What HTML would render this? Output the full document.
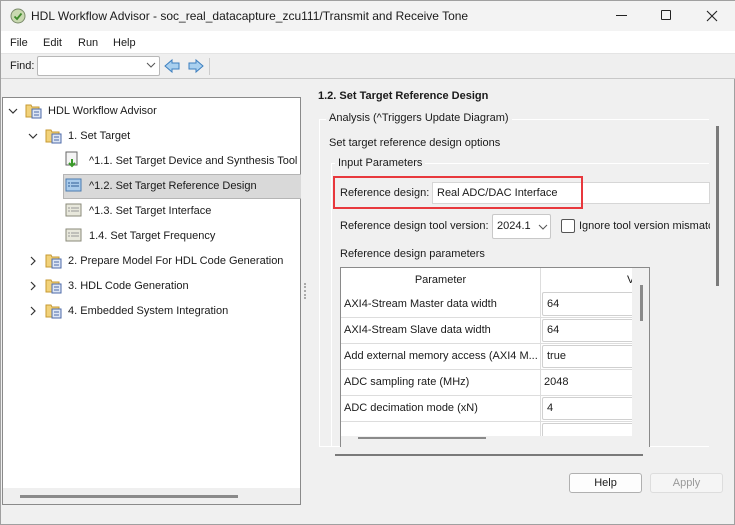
<!DOCTYPE html>
<html><head><style>
*{margin:0;padding:0;box-sizing:border-box}
body{width:735px;height:525px;overflow:hidden;background:#f0f0f0;font-family:"Liberation Sans",sans-serif;font-size:11px;color:#1a1a1a;position:relative;border:1px solid #a0a0a0}
.a{position:absolute;white-space:nowrap}
</style></head><body>
<div class="a" style="left:0;top:0;width:735px;height:30px;background:#f3f3f3"></div>
<svg class="a" style="left:9px;top:7px" width="16" height="16"><circle cx="8" cy="8" r="7" fill="#c9d9b0" stroke="#7a8a6a"/><path d="M4.5 8.5l2.5 2.5 4.5-5.5" stroke="#3e8a2a" stroke-width="1.8" fill="none"/></svg>
<div class="a" style="left:30px;top:8px;font-size:12px">HDL Workflow Advisor - soc_real_datacapture_zcu111/Transmit and Receive Tone</div>
<div class="a" style="left:615px;top:14px;width:11px;height:1px;background:#222"></div>
<div class="a" style="left:660px;top:9px;width:10px;height:10px;border:1px solid #222;border-radius:1px"></div>
<svg class="a" style="left:705px;top:9px" width="12" height="12"><path d="M1 1L11 11M11 1L1 11" stroke="#222" stroke-width="1.1"/></svg>
<div class="a" style="left:0;top:30px;width:735px;height:22px;background:#fff"></div>
<div class="a" style="left:9px;top:36px">File</div>
<div class="a" style="left:42px;top:36px">Edit</div>
<div class="a" style="left:77px;top:36px">Run</div>
<div class="a" style="left:112px;top:36px">Help</div>
<div class="a" style="left:0;top:52px;width:735px;height:26px;background:#efefef;border-top:1px solid #e4e4e4;border-bottom:1px solid #c8c8c8"></div>
<div class="a" style="left:9px;top:59px">Find:</div>
<div class="a" style="left:36px;top:55px;width:123px;height:20px;background:#fff;border:1px solid #b8b8b8;border-radius:2px"></div>
<svg class="a" style="left:145px;top:61px" width="10" height="6"><path d="M1 1l4 4 4-4" stroke="#555" fill="none"/></svg>
<svg class="a" style="left:163px;top:57px" width="40" height="16"><path d="M1 8l7-6v3h7v6H8v3z" fill="#a9d0ef" stroke="#3d7fbf"/><path d="M39 8l-7-6v3h-7v6h7v3z" fill="#a9d0ef" stroke="#3d7fbf"/></svg>
<div class="a" style="left:208px;top:57px;width:1px;height:17px;background:#ccc"></div>
<div class="a" style="left:1px;top:96px;width:299px;height:408px;background:#fff;border:1px solid #8a8a8a"></div>
<div class="a" style="left:2px;top:487px;width:297px;height:16px;background:#efefef"></div>
<div class="a" style="left:19px;top:494px;width:218px;height:3px;background:#8a8a8a"></div>
<div class="a" style="left:62px;top:173px;width:238px;height:25px;background:#d9d9d9;border:1px solid #b5b5b5;border-right:none"></div>
<svg class="a" style="left:0;top:96px" width="300" height="230">
<g fill="none" stroke="#333" stroke-width="1.2"><path d="M8 12l4 4 4-4"/><path d="M28 37l4 4 4-4"/><path d="M30 160l4 4-4 4"/><path d="M30 185l4 4-4 4"/><path d="M30 210l4 4-4 4"/></g>
<g id="f"><path d="M25 8h5l1 2h7v10H25z" fill="#f2d27a" stroke="#c79a32"/><rect x="31" y="12" width="9" height="9" fill="#dde6f5" stroke="#4d6aa8"/><path d="M33 15h5M33 18h5" stroke="#4d6aa8"/></g>
<use href="#f" x="20" y="25"/><use href="#f" x="20" y="150"/><use href="#f" x="20" y="175"/><use href="#f" x="20" y="200"/>
<rect x="65" y="55" width="11" height="13" fill="#f4f4f4" stroke="#666"/><path d="M71 62v7M68 66l3 3 3-3" stroke="#3a9a2a" stroke-width="2" fill="none"/>
<rect x="65" y="82" width="15" height="12" fill="#a9cbeb" stroke="#4a7bb0"/><path d="M67 86h2M70 86h8M67 89h2M70 89h8" stroke="#2f5e94"/>
<rect x="65" y="107" width="15" height="12" fill="#e8e8dc" stroke="#8a8a7a"/><path d="M67 111h2M70 111h8M67 114h2M70 114h8" stroke="#999"/>
<rect x="65" y="132" width="15" height="12" fill="#e8e8dc" stroke="#8a8a7a"/><path d="M67 136h2M70 136h8M67 139h2M70 139h8" stroke="#999"/>
</svg>
<div class="a" style="left:47px;top:104px">HDL Workflow Advisor</div>
<div class="a" style="left:67px;top:129px">1. Set Target</div>
<div class="a" style="left:88px;top:154px">^1.1. Set Target Device and Synthesis Tool</div>
<div class="a" style="left:88px;top:179px">^1.2. Set Target Reference Design</div>
<div class="a" style="left:88px;top:204px">^1.3. Set Target Interface</div>
<div class="a" style="left:88px;top:229px">1.4. Set Target Frequency</div>
<div class="a" style="left:67px;top:254px">2. Prepare Model For HDL Code Generation</div>
<div class="a" style="left:67px;top:279px">3. HDL Code Generation</div>
<div class="a" style="left:67px;top:304px">4. Embedded System Integration</div>
<div class="a" style="left:303px;top:282px;width:2px;height:16px;border-left:2px dotted #aaa"></div>
<div class="a" style="left:317px;top:89px;font-weight:bold">1.2. Set Target Reference Design</div>
<div class="a" style="left:318px;top:118px;width:390px;height:328px;border-left:1px solid #fff;border-top:1px solid #fff;border-bottom:1px solid #fff"></div>
<div class="a" style="left:325px;top:111px;background:#f0f0f0;padding:0 3px">Analysis (^Triggers Update Diagram)</div>
<div class="a" style="left:715px;top:125px;width:3px;height:160px;background:#7a7a7a"></div>
<div class="a" style="left:328px;top:136px">Set target reference design options</div>
<div class="a" style="left:330px;top:162px;width:378px;height:284px;border-left:1px solid #fff;border-top:1px solid #fff"></div>
<div class="a" style="left:334px;top:156px;background:#f0f0f0;padding:0 3px">Input Parameters</div>
<div class="a" style="left:431px;top:181px;width:278px;height:22px;background:#fff;border:1px solid #d6d6d6"></div>
<div class="a" style="left:332px;top:175px;width:250px;height:33px;border:2px solid #e8383d"></div>
<div class="a" style="left:339px;top:186px">Reference design:</div>
<div class="a" style="left:436px;top:186px">Real ADC/DAC Interface</div>
<div class="a" style="left:339px;top:219px">Reference design tool version:</div>
<div class="a" style="left:491px;top:213px;width:59px;height:25px;background:#fff;border:1px solid #c8c8c8;border-radius:2px"></div>
<div class="a" style="left:496px;top:219px">2024.1</div>
<svg class="a" style="left:537px;top:223px" width="10" height="6"><path d="M1 1l4 4 4-4" stroke="#555" fill="none"/></svg>
<div class="a" style="left:560px;top:218px;width:14px;height:14px;border:1px solid #555;border-radius:2px;background:#fff"></div>
<div class="a" style="left:578px;top:219px;width:131px;overflow:hidden">Ignore tool version mismatch</div>
<div class="a" style="left:339px;top:247px">Reference design parameters</div>
<div class="a" style="left:339px;top:266px;width:310px;height:180px;background:#f0f0f0;border:1px solid #8a8a8a;border-bottom:none"></div>
<div class="a" style="left:340px;top:267px;width:291px;height:168px;background:#fff;overflow:hidden">
<div class="a" style="left:0;top:0;width:200px;height:24px;border-right:1px solid #ddd;text-align:center;line-height:24px">Parameter</div>
<div class="a" style="left:286px;top:6px">V</div>
</div>
<div class="a" style="left:639px;top:284px;width:3px;height:36px;background:#8a8a8a"></div>
<div class="a" style="left:357px;top:436px;width:128px;height:2px;background:#8a8a8a"></div>
<div class="a" style="left:340px;top:291px;width:291px;height:144px;overflow:hidden">
<div style="position:absolute;left:199px;top:0;width:1px;height:144px;background:#ddd"></div>
<div style="position:absolute;left:0;top:25px;width:291px;height:1px;background:#ddd"></div>
<div style="position:absolute;left:0;top:51px;width:291px;height:1px;background:#ddd"></div>
<div style="position:absolute;left:0;top:77px;width:291px;height:1px;background:#ddd"></div>
<div style="position:absolute;left:0;top:103px;width:291px;height:1px;background:#ddd"></div>
<div style="position:absolute;left:0;top:129px;width:291px;height:1px;background:#ddd"></div>
<div style="position:absolute;left:201px;top:0;width:95px;height:24px;border:1px solid #d0d0d0;border-radius:2px"></div>
<div style="position:absolute;left:201px;top:27px;width:95px;height:23px;border:1px solid #d0d0d0;border-radius:2px"></div>
<div style="position:absolute;left:201px;top:53px;width:95px;height:23px;border:1px solid #d0d0d0;border-radius:2px"></div>
<div style="position:absolute;left:201px;top:105px;width:95px;height:23px;border:1px solid #d0d0d0;border-radius:2px"></div>
<div style="position:absolute;left:201px;top:131px;width:95px;height:23px;border:1px solid #d0d0d0;border-radius:2px"></div>
<div style="position:absolute;left:3px;top:6px">AXI4-Stream Master data width</div>
<div style="position:absolute;left:206px;top:6px">64</div>
<div style="position:absolute;left:3px;top:32px">AXI4-Stream Slave data width</div>
<div style="position:absolute;left:206px;top:32px">64</div>
<div style="position:absolute;left:3px;top:58px;width:194px;overflow:hidden">Add external memory access (AXI4 M...</div>
<div style="position:absolute;left:206px;top:58px">true</div>
<div style="position:absolute;left:3px;top:84px">ADC sampling rate (MHz)</div>
<div style="position:absolute;left:203px;top:84px">2048</div>
<div style="position:absolute;left:3px;top:110px">ADC decimation mode (xN)</div>
<div style="position:absolute;left:206px;top:110px">4</div>
</div>
<div class="a" style="left:334px;top:453px;width:308px;height:2px;background:#7a7a7a"></div>
<div class="a" style="left:568px;top:472px;width:73px;height:20px;background:#fdfdfd;border:1px solid #b0b0b0;border-radius:3px;text-align:center;line-height:18px">Help</div>
<div class="a" style="left:649px;top:472px;width:73px;height:20px;background:#f5f5f5;border:1px solid #ddd;border-radius:3px;text-align:center;line-height:18px;color:#999">Apply</div>
</body></html>
